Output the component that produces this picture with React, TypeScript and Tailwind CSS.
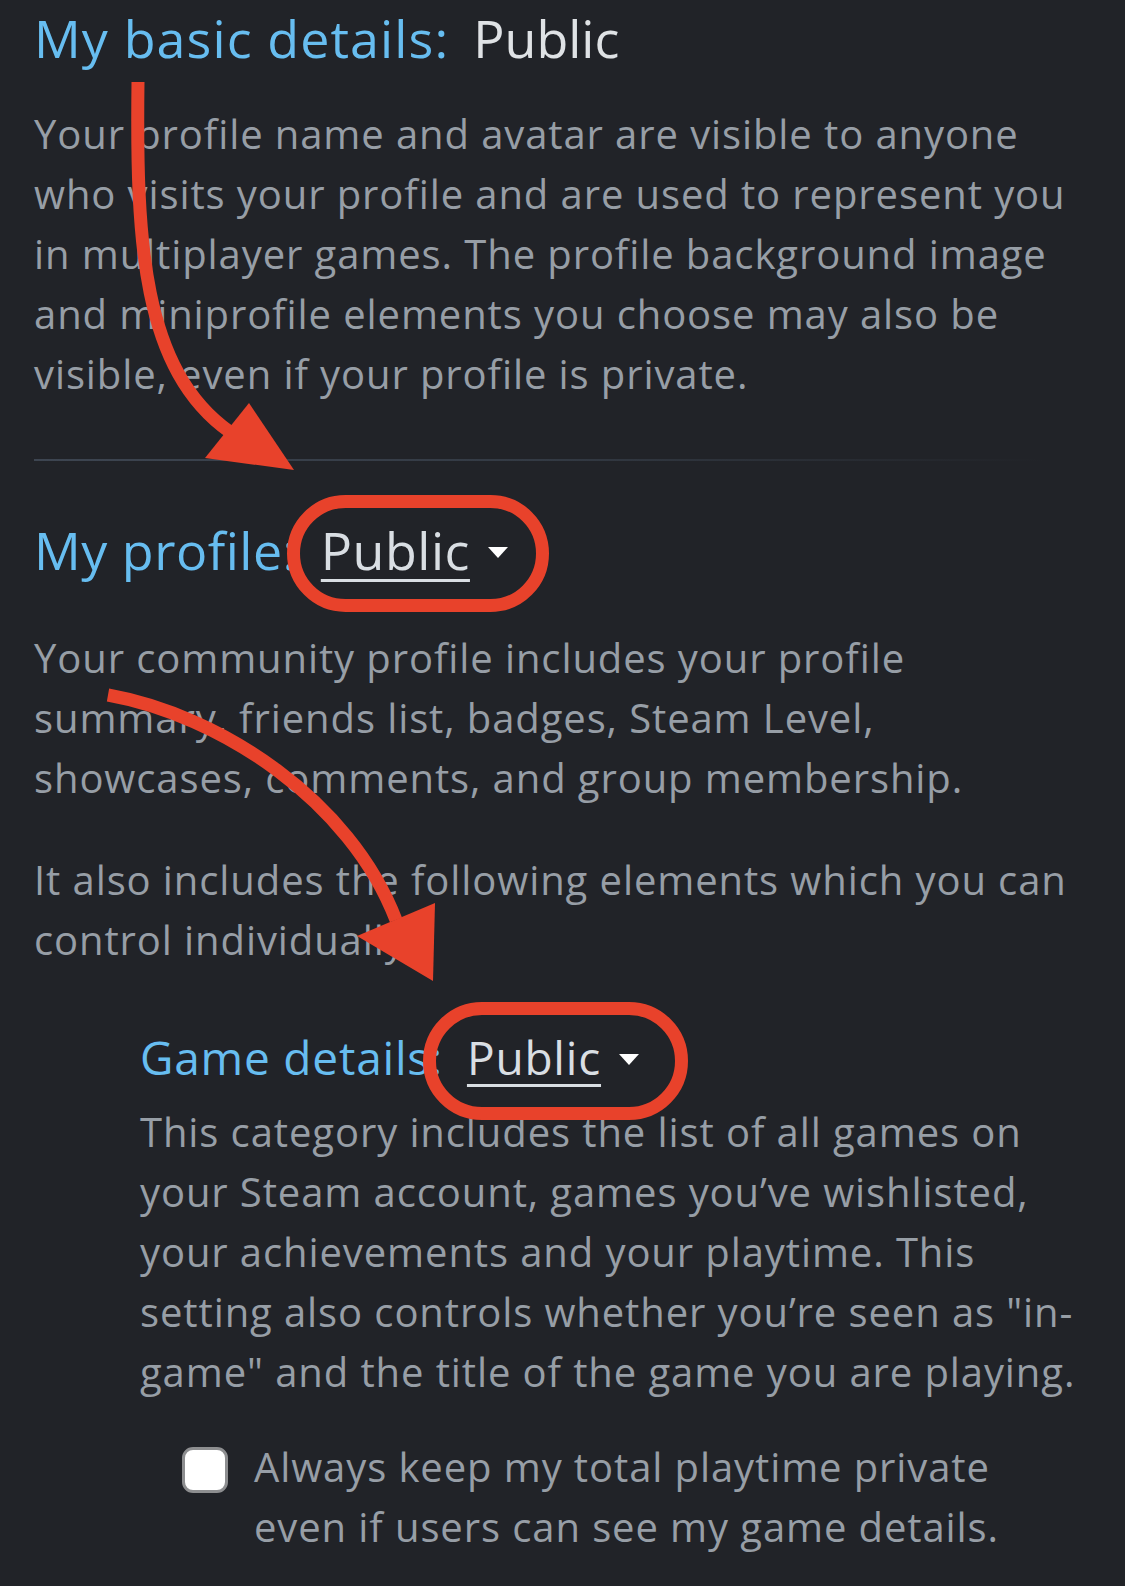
import React from "react";

const basicLines = [
  "Your profile name and avatar are visible to anyone",
  "who visits your profile and are used to represent you",
  "in multiplayer games. The profile background image",
  "and miniprofile elements you choose may also be",
  "visible, even if your profile is private.",
];

const profileLines = [
  "Your community profile includes your profile",
  "summary, friends list, badges, Steam Level,",
  "showcases, comments, and group membership.",
];

const controlLines = [
  "It also includes the following elements which you can",
  "control individually:",
];

const gameLines = [
  "This category includes the list of all games on",
  "your Steam account, games you\u2019ve wishlisted,",
  "your achievements and your playtime. This",
  "setting also controls whether you\u2019re seen as \"in-",
  "game\" and the title of the game you are playing.",
];

const playtimeLines = [
  "Always keep my total playtime private",
  "even if users can see my game details.",
];

function Lines({ lines, className = "" }: { lines: string[]; className?: string }) {
  return (
    <p className={`text-[40px] leading-[60px] tracking-[0.9px] text-[#979ea6] ${className}`}>
      {lines.map((l) => (
        <span key={l} className="block whitespace-nowrap">
          {l}
        </span>
      ))}
    </p>
  );
}

function Caret() {
  return (
    <svg width="20" height="11" viewBox="0 0 20 11" className="ml-[18px] mt-[4px]">
      <polygon points="0,0 20,0 10,11" fill="#ffffff" />
    </svg>
  );
}

function Dropdown({ size }: { size: string }) {
  return (
    <span className={`flex items-center text-[#d9dee3] ${size}`}>
      <span className="underline decoration-[3px] underline-offset-[9px]">Public</span>
      <Caret />
    </span>
  );
}

export default function App() {
  return (
    <div className="relative min-h-screen w-full overflow-hidden bg-[#212328] font-['Open_Sans',sans-serif]">
      <div className="flex flex-col pl-[34px] pt-[8px]">
        <h2 className="flex h-[60px] items-center gap-[24px] text-[52px] tracking-[1.1px]">
          <span className="text-[#67bdf0]">My basic details:</span>
          <span className="tracking-[0px] text-[#dfe2e5]">Public</span>
        </h2>

        <Lines lines={basicLines} className="mt-[36px]" />

        <div className="mt-[55px] h-[2px] w-[1010px] bg-linear-to-r from-[#3d4551] via-[#333a44] to-transparent" />

        <h2 className="mt-[59px] flex h-[60px] items-center gap-[24px] text-[52px] tracking-[0.5px]">
          <span className="text-[#67bdf0]">My profile:</span>
          <Dropdown size="text-[52px]" />
        </h2>

        <Lines lines={profileLines} className="mt-[48px]" />
        <Lines lines={controlLines} className="mt-[42px]" />

        <div className="ml-[106px] flex flex-col">
          <h3 className="mt-[57px] flex h-[60px] items-center gap-[24px] text-[46px] tracking-[0.8px]">
            <span className="text-[#67bdf0]">Game details:</span>
            <Dropdown size="text-[46px]" />
          </h3>

          <Lines lines={gameLines} className="mt-[15px]" />

          <label className="mt-[35px] ml-[42px] flex items-start gap-[26px]">
            <span className="mt-[10px] h-[46px] w-[46px] shrink-0 rounded-[11px] border-[3px] border-[#8d8e90] bg-white" />
            <Lines lines={playtimeLines} />
          </label>
        </div>
      </div>

      {/* annotation layer: rings around the dropdowns and the two arrows */}
      <div className="pointer-events-none absolute left-[287px] top-[495px] h-[117px] w-[262px] rounded-full border-[13px] border-[#e8422b]" />
      <div className="pointer-events-none absolute left-[423px] top-[1002px] h-[118px] w-[265px] rounded-full border-[13px] border-[#e8422b]" />

      <svg
        className="pointer-events-none absolute left-0 top-0"
        width="1125"
        height="1586"
        viewBox="0 0 1125 1586"
      >
        <path d="M138 82 C136 240, 142 370, 230 432" fill="none" stroke="#e8422b" strokeWidth="13" />
        <polygon points="249,403 205,458 294,470" fill="#e8422b" />
        <path d="M108 695 C220 715, 350 800, 396 920" fill="none" stroke="#e8422b" strokeWidth="13" />
        <polygon points="357,936 435,903 433,981" fill="#e8422b" />
      </svg>
    </div>
  );
}
